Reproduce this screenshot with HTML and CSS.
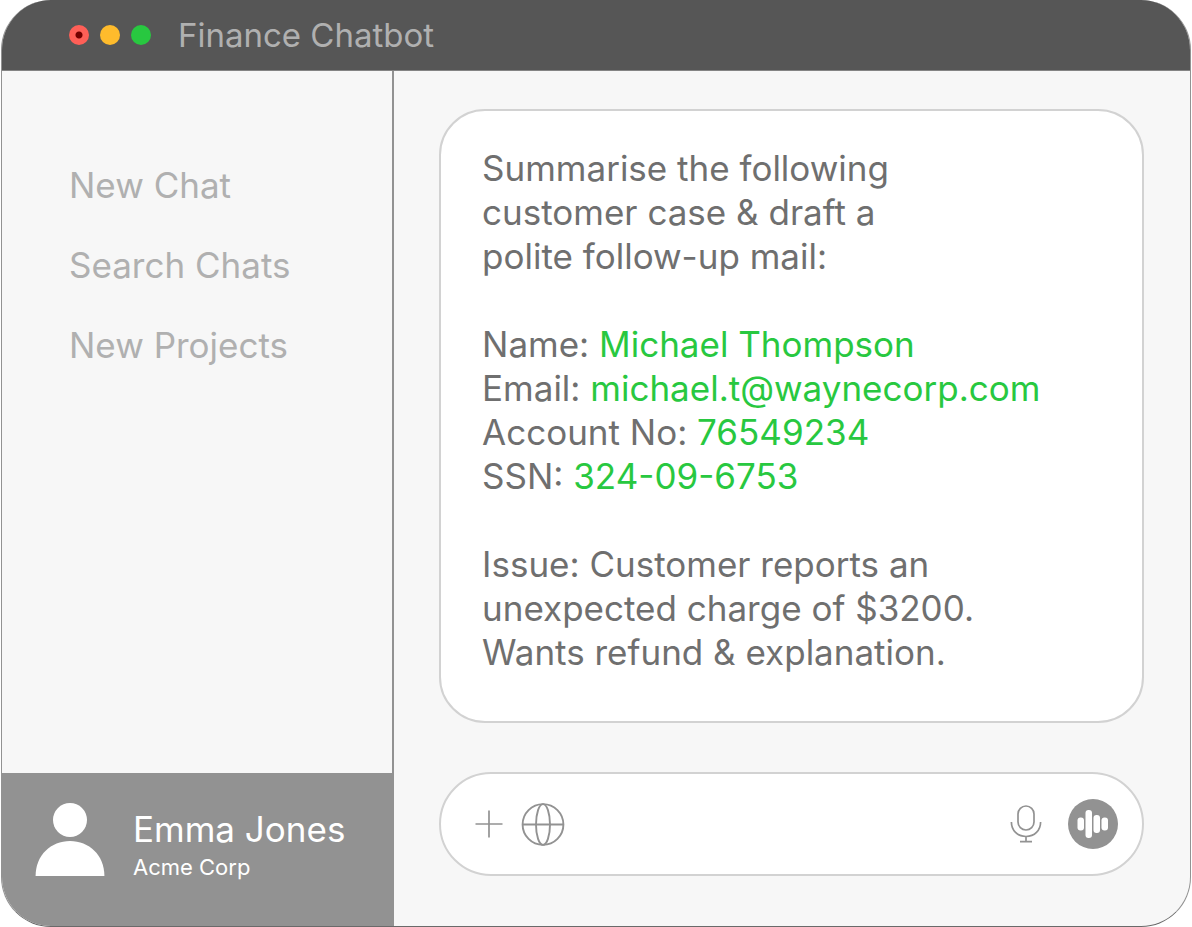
FILE: index.html
```html
<!DOCTYPE html>
<html lang="en">
<head>
  <meta charset="UTF-8" />
  <meta name="viewport" content="width=device-width, initial-scale=1.0"/>
  <title>Finance Chatbot</title>
  <link rel="stylesheet" href="styles.css">
</head>
<body>
  <div class="window">
    <header class="titlebar">
      <div class="dots">
        <span class="dot red"></span>
        <span class="dot yellow"></span>
        <span class="dot green"></span>
      </div>
      <h1>Finance Chatbot</h1>
    </header>

    <div class="content">
      <aside class="sidebar">
        <nav>
          <a href="#new-chat">New Chat</a>
          <a href="#search">Search Chats</a>
          <a href="#projects">New Projects</a>
        </nav>
        <div class="user">
          <svg width="70" height="74" viewBox="0 0 70 74" fill="#fff" aria-hidden="true">
            <circle cx="35" cy="17" r="17"/>
            <path d="M.6 73C.6 52 16 38 35 38s34.400 14 34.400 35z"/>
          </svg>
          <div>
            <div class="user-name">Emma Jones</div>
            <div class="user-org">Acme Corp</div>
          </div>
        </div>
      </aside>

      <main>
        <section class="message">
          <p>Summarise the following<br>customer case &amp; draft a<br>polite follow-up mail:</p>
          <p>
            Name: <span class="safe">Michael Thompson</span><br>
            Email: <span class="safe">michael.t@waynecorp.com</span><br>
            Account No: <span class="safe">76549234</span><br>
            SSN: <span class="safe">324-09-6753</span>
          </p>
          <p>Issue: Customer reports an<br>unexpected charge of $3200.<br>Wants refund &amp; explanation.</p>
        </section>

        <form class="composer">
          <button type="button" aria-label="Add">
            <svg width="28" height="28" viewBox="0 0 28 28" stroke="#929292" stroke-width="1.700">
              <path d="M.5 14h27M14 .5v27"/>
            </svg>
          </button>
          <button type="button" aria-label="Browse the web">
            <svg width="44" height="44" viewBox="0 0 44 44" fill="none" stroke="#929292" stroke-width="1.900">
              <circle cx="22" cy="22.500" r="20.400"/>
              <ellipse cx="22" cy="22.500" rx="7" ry="20.400"/>
              <path d="M1.500 22.500h41"/>
            </svg>
          </button>
          <input type="text" aria-label="Message">
          <button type="button" aria-label="Dictate">
            <svg width="32" height="40" viewBox="0 0 32 40" fill="none" stroke="#929292" stroke-width="1.700">
              <rect x="8" y="2" width="16" height="24" rx="8"/>
              <path d="M1.400 18C1.400 26.500 7.500 32.500 16 32.500s14.600-6 14.600-14.500M16 32.500v5M10 37.700h12"/>
            </svg>
          </button>
          <button type="button" class="voice" aria-label="Voice mode">
            <svg width="50" height="50" viewBox="0 0 50 50" fill="#fff">
              <circle cx="25" cy="25" r="25" fill="#929292"/>
              <rect x="9.500" y="18.500" width="6.500" height="13" rx="3"/>
              <rect x="17.500" y="11" width="6.500" height="28" rx="3"/>
              <rect x="25.500" y="16" width="6.500" height="18" rx="3"/>
              <rect x="33.500" y="18.500" width="6.500" height="13" rx="3"/>
            </svg>
          </button>
        </form>
      </main>
    </div>
  </div>
</body>
</html>
```
FILE: styles.css
```css
* {
  box-sizing: border-box;
}
body {
  margin: 0;
  background: #fff;
  font-family: Inter, "Liberation Sans", sans-serif;
}
.window {
  display: flex;
  flex-direction: column;
  min-height: 100vh;
  margin: 0 1px;
  background: #f7f7f7;
  border: 1px solid #929292;
  border-top: none;
  border-bottom-color: #6a6a6a;
  border-radius: 50px;
  overflow: hidden;
}
.titlebar {
  display: flex;
  align-items: center;
  gap: 27px;
  height: 71px;
  margin: 0 -1px;
  padding-left: 68px;
  background: #565656;
  border-bottom: 1px solid #848484;
}
.titlebar h1 {
  margin: 0;
  color: #b0b0b0;
  font-size: 33px;
  line-height: 44px;
  font-weight: 400;
}
.dots {
  display: flex;
  gap: 11px;
}
.dot {
  width: 20px;
  height: 20px;
  border-radius: 50%;
}
.red {
  background: radial-gradient(circle, #730000 3px, #ff5f57 4px);
}
.yellow {
  background: #febb2c;
}
.green {
  background: #28c840;
}
.content {
  display: flex;
  flex: 1;
}
.sidebar {
  display: flex;
  flex: none;
  flex-direction: column;
  justify-content: space-between;
  width: 33%;
  border-right: 2px solid #929292;
}
nav {
  display: flex;
  flex-direction: column;
  gap: 36px;
  padding: 92px 20px 20px 67px;
}
nav a {
  color: #b0b0b0;
  font-size: 35px;
  line-height: 44px;
  text-decoration: none;
  white-space: nowrap;
}
.user {
  display: flex;
  gap: 28px;
  padding: 30px 20px 39px 33px;
  color: #fff;
  background: #929292;
}
.user svg {
  flex: none;
}
.user-name {
  padding-top: 4px;
  font-size: 35px;
  line-height: 44px;
  white-space: nowrap;
}
.user-org {
  padding-bottom: 4px;
  font-size: 22px;
  line-height: 32px;
}
main {
  display: flex;
  flex: 1;
  flex-direction: column;
  gap: 49px;
  min-width: 0;
  padding: 38px 46px 50px 45px;
}
.message {
  flex: 1;
  padding: 35px 40px 46px 41px;
  color: #6f6f6f;
  background: #fff;
  border: 2px solid #d2d2d2;
  border-radius: 46px;
  font-size: 35px;
  line-height: 44px;
}
.message p {
  margin: 0 0 44px;
}
.message p:last-child {
  margin-bottom: 0;
}
.safe {
  color: #28c840;
}
.composer {
  display: flex;
  align-items: center;
  gap: 18px;
  height: 104px;
  padding: 0 24px 0 34px;
  background: #fff;
  border: 2px solid #d2d2d2;
  border-radius: 52px;
}
.composer button {
  display: flex;
  padding: 0;
  background: none;
  border: none;
  cursor: pointer;
}
.composer input {
  flex: 1;
  width: 0;
  min-width: 0;
  height: 44px;
  padding: 0;
  color: #6f6f6f;
  background: none;
  border: none;
  outline: none;
  font: inherit;
  font-size: 35px;
}
.composer .voice {
  margin-left: 8px;
}
```
